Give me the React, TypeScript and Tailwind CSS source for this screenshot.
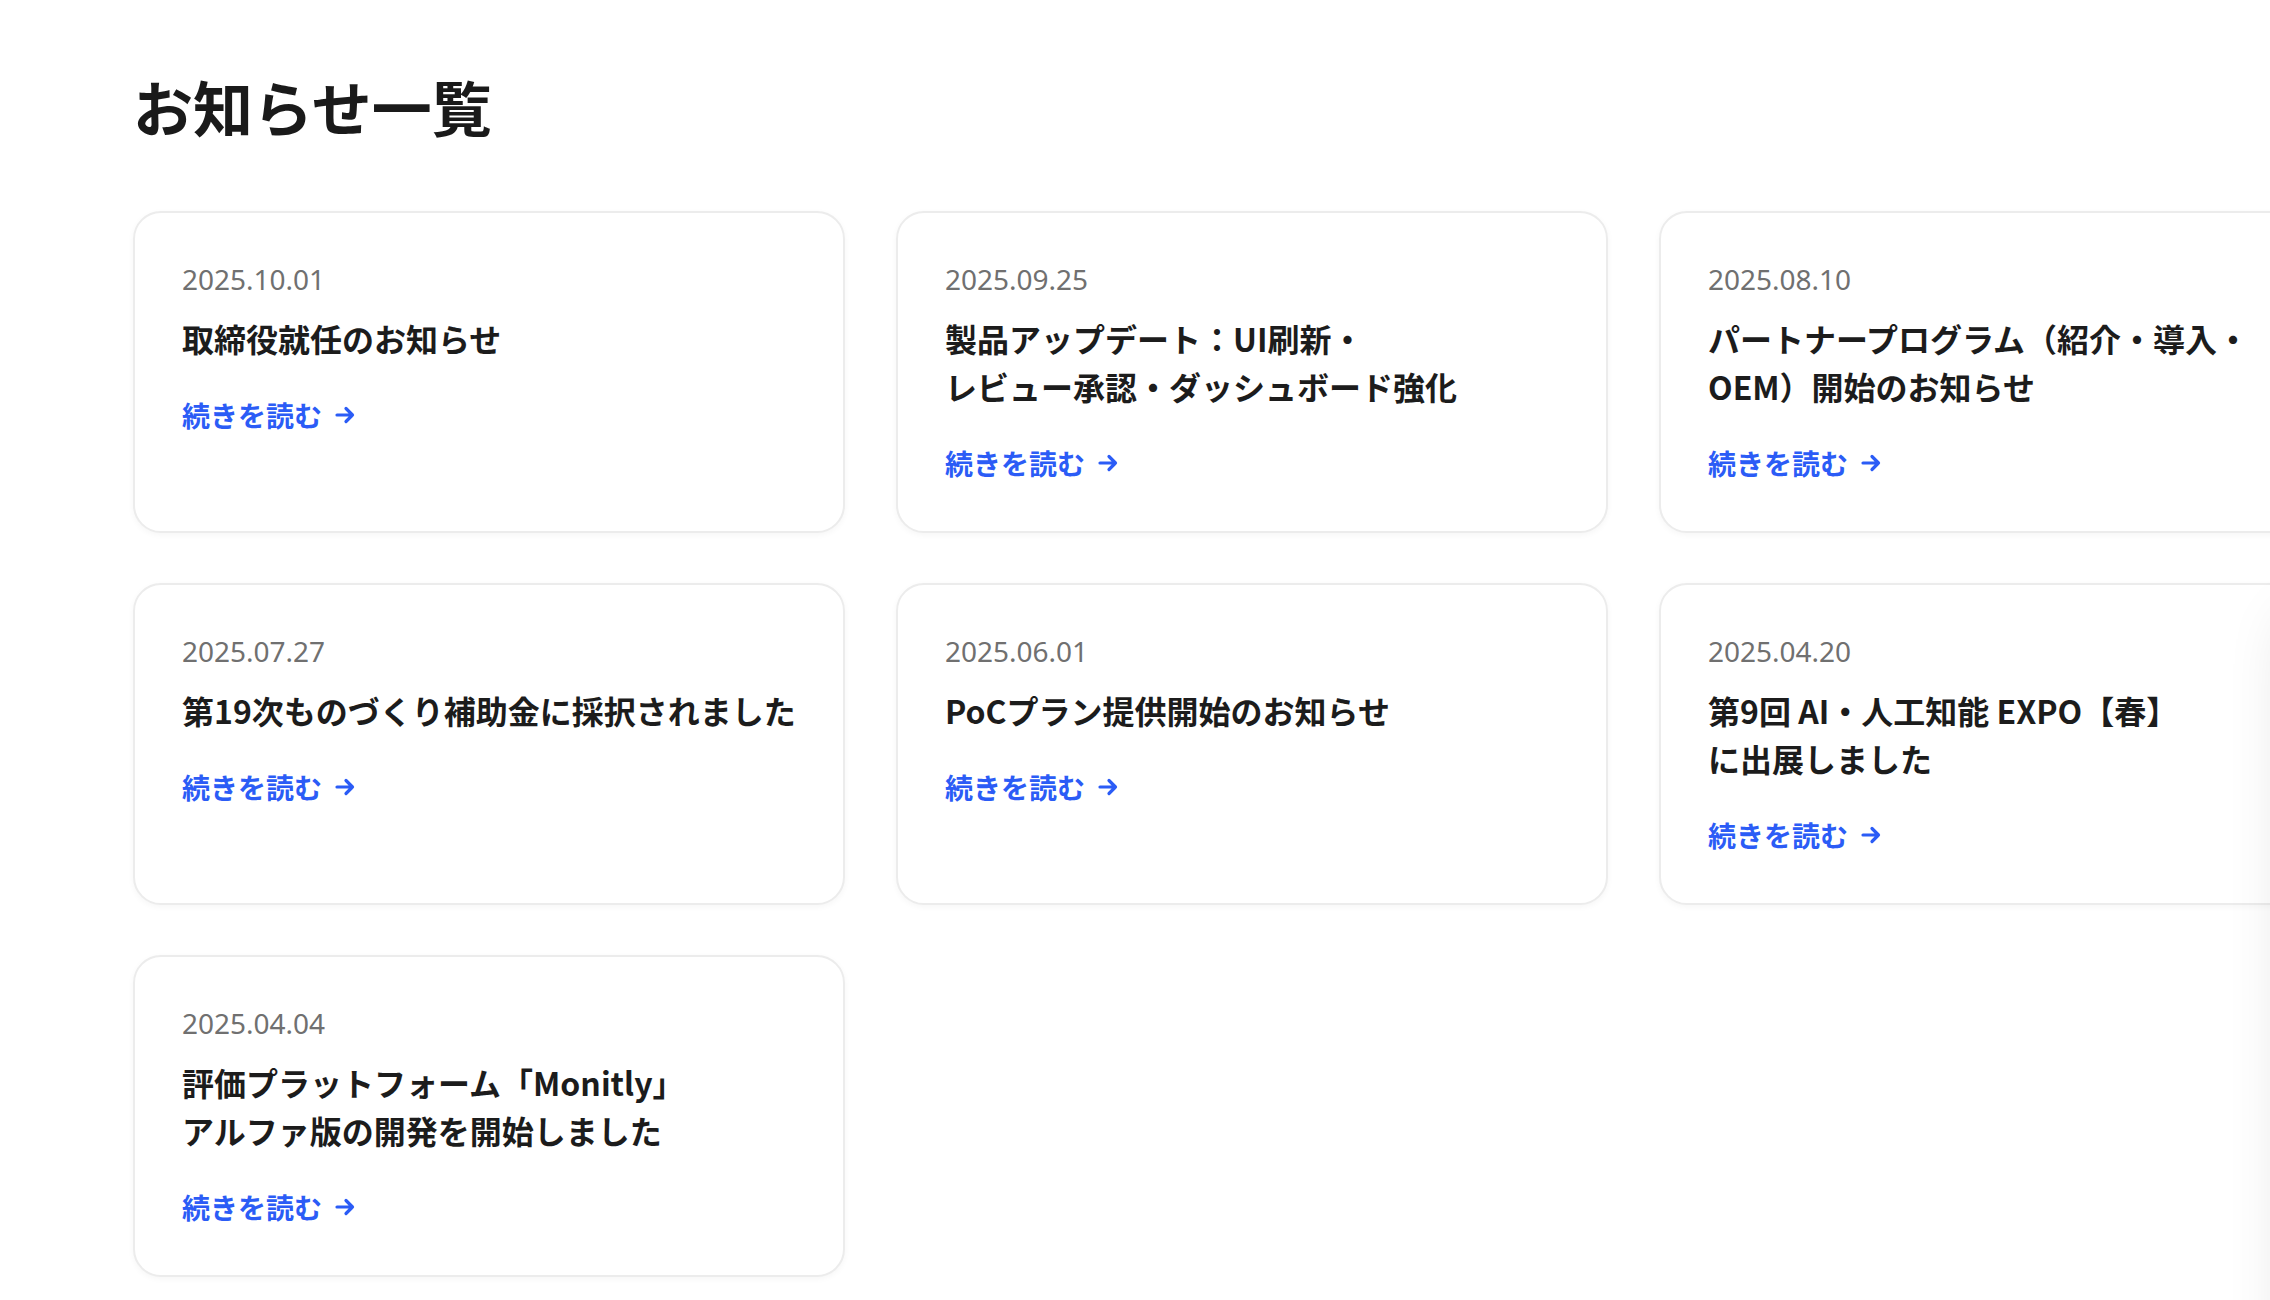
import React from "react";

type News = { date: string; lines: string[] };

const items: News[] = [
  { date: "2025.10.01", lines: ["取締役就任のお知らせ"] },
  { date: "2025.09.25", lines: ["製品アップデート：UI刷新・", "レビュー承認・ダッシュボード強化"] },
  { date: "2025.08.10", lines: ["パートナープログラム（紹介・導入・", "OEM）開始のお知らせ"] },
  { date: "2025.07.27", lines: ["第19次ものづくり補助金に採択されました"] },
  { date: "2025.06.01", lines: ["PoCプラン提供開始のお知らせ"] },
  { date: "2025.04.20", lines: ["第9回 AI・人工知能 EXPO【春】", "に出展しました"] },
  { date: "2025.04.04", lines: ["評価プラットフォーム「Monitly」", "アルファ版の開発を開始しました"] },
];

const jp = { fontFamily: '"Noto Sans CJK JP", "Noto Sans", sans-serif' };

function Arrow() {
  return (
    <svg width="22" height="22" viewBox="0 0 22 22" fill="none" className="ml-[12px]">
      <path d="M3 11h15.5M12 4.5l6.5 6.5-6.5 6.5" stroke="#2b5cf6" strokeWidth="3.2" strokeLinecap="round" strokeLinejoin="round" />
    </svg>
  );
}

function Card({ item }: { item: News }) {
  return (
    <div className="h-[322px] w-[712px] rounded-[28px] border-2 border-[#ececec] bg-white pl-[47px] pr-[30px] pt-[46px] shadow-[0_2px_6px_rgba(0,0,0,0.04)]">
      <div className="text-[28px] leading-[40px] text-[#707070]" style={{ fontFamily: '"Noto Sans", sans-serif' }}>
        {item.date}
      </div>
      <div className="mt-[15px] text-[32px] font-bold leading-[48px] text-[#1c1c1c]" style={jp}>
        {item.lines.map((l, i) => (
          <div key={i} className="whitespace-nowrap">{l}</div>
        ))}
      </div>
      <div className="mt-[33px] flex items-center text-[28px] font-bold leading-[40px] text-[#2b5cf6]" style={jp}>
        <span>続きを読む</span>
        <Arrow />
      </div>
    </div>
  );
}

export default function App() {
  return (
    <div className="relative h-[1300px] w-[2270px] overflow-hidden bg-white">
      <div className="pl-[133px] pt-[70px]">
        <h1 className="text-[60px] font-bold leading-[72px] text-[#1a1a1a]" style={jp}>
          お知らせ一覧
        </h1>
        <div className="mt-[69px] grid w-max grid-cols-[712px_712px_712px] gap-x-[51px] gap-y-[50px]">
          {items.map((it, i) => (
            <Card key={i} item={it} />
          ))}
        </div>
      </div>
      <div className="absolute left-[2292px] top-[620px] h-[1000px] w-[400px] bg-white shadow-[0_0_60px_rgba(0,0,0,0.14)]" />
    </div>
  );
}
